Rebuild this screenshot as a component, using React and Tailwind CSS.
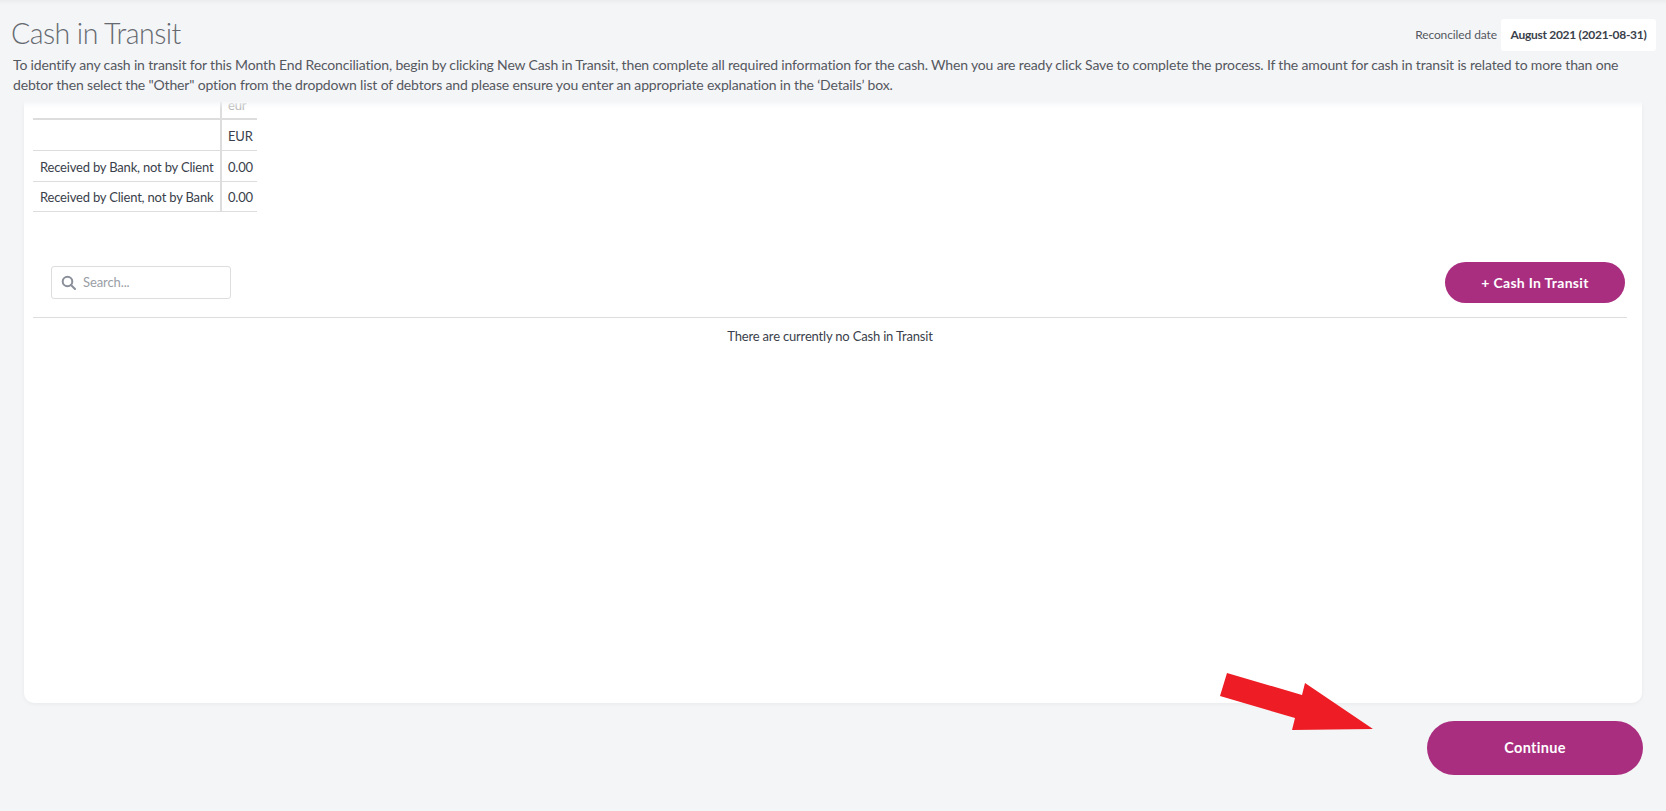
import React from "react";

function Row({ label, value, h = "h-[31px]" }) {
  return (
    <div className={`flex ${h} border-b border-[#dddddd]`}>
      <div className="w-[189px] pl-[7px] pt-[3px] flex items-center border-r-2 border-[#dddddd] whitespace-nowrap">{label}</div>
      <div className="flex-1 pl-[6px] pt-[3px] flex items-center">{value}</div>
    </div>
  );
}

export default function App() {
  return (
    <div className="h-[811px] w-[1666px] overflow-hidden bg-[#f4f5f7] flex flex-col font-['Lato','Noto_Sans',sans-serif] text-[14px] text-[#3a3f4b]">
      <header className="h-[102px] shrink-0 relative z-10 bg-[#f4f5f7] shadow-[inset_0_5px_5px_-4px_rgba(0,0,0,0.06),0_4px_6px_-2px_rgba(244,245,247,1)] pl-[13px] pr-[10px] pt-[19px]">
        <div className="flex items-start justify-between h-[32px]">
          <h1 className="-ml-[2px] -mt-[2px] text-[28.5px] leading-[32px] font-light text-[#666a70] tracking-[-0.55px]">Cash in Transit</h1>
          <div className="flex items-center h-[32px]">
            <span className="text-[12px] tracking-[-0.1px] text-[#55585f] mr-[4px]">Reconciled date</span>
            <span className="bg-white rounded-[3px] h-[32px] w-[155px] flex items-center justify-center text-[12px] tracking-[-0.28px] font-bold text-[#3a3f4b]">August 2021 (2021-08-31)</span>
          </div>
        </div>
        <p className="mt-[4px] text-[14px] tracking-[-0.16px] leading-[20px] text-[#55585f]">
          To identify any cash in transit for this Month End Reconciliation, begin by clicking New Cash in Transit, then complete all required information for the cash. When you are ready click Save to complete the process. If the amount for cash in transit is related to more than one
          <br />
          debtor then select the "Other" option from the dropdown list of debtors and please ensure you enter an appropriate explanation in the ‘Details’ box.
        </p>
      </header>

      <main className="mx-[24px] h-[601px] shrink-0 bg-white rounded-b-[10px] shadow-[0_1px_4px_rgba(0,0,0,0.05)] pl-[9px] pr-[15px] overflow-hidden">
        <div className="w-[224px] text-[13px] tracking-[-0.19px] text-[#3a3f4b]">
          <div className="flex h-[18px] border-b-2 border-[#dddddd]">
            <div className="w-[189px] border-r-2 border-[#dddddd]"></div>
            <div className="flex-1 pl-[6px] -mt-[2px] text-[#b5b5b5] leading-[10px]">eur</div>
          </div>
          <Row label="" value="EUR" />
          <Row label="Received by Bank, not by Client" value="0.00" />
          <Row label="Received by Client, not by Bank" value="0.00" h="h-[30px]" />
        </div>

        <div className="mt-[50px] flex items-center justify-between pl-[18px] pr-[2px] pb-[14px] border-b border-[#dddddd]">
          <div className="w-[180px] h-[33px] border border-[#dddddd] rounded-[3px] flex items-center pl-[9px] gap-[7px]">
            <svg width="15" height="15" viewBox="0 0 15 15" fill="none" stroke="#8a8f99" strokeWidth="2">
              <circle cx="6.5" cy="6.5" r="4.8" />
              <path d="M10 10l4 4" strokeLinecap="round" />
            </svg>
            <span className="text-[13px] tracking-[-0.1px] text-[#9a9ea6]">Search...</span>
          </div>
          <button className="w-[180px] h-[41px] rounded-full bg-[#a92e7f] text-white text-[14px] font-bold tracking-[0.3px]">+ Cash In Transit</button>
        </div>

        <div className="mt-[8px] text-center text-[13px] tracking-[-0.18px] leading-[20px] text-[#3a3f4b]">There are currently no Cash in Transit</div>
      </main>

      <footer className="flex justify-end pr-[23px] pt-[18px] relative">
        <button className="w-[216px] h-[54px] rounded-full bg-[#a92e7f] text-white text-[14.5px] font-bold tracking-[0.3px]">Continue</button>
        <svg className="absolute left-[1220px] top-[-30px]" width="155" height="60" viewBox="0 0 155 60">
          <polygon points="7,0 0,23 75,45 72,57 153,56 85,10 82,22" fill="#ee1d25" />
        </svg>
      </footer>
    </div>
  );
}
